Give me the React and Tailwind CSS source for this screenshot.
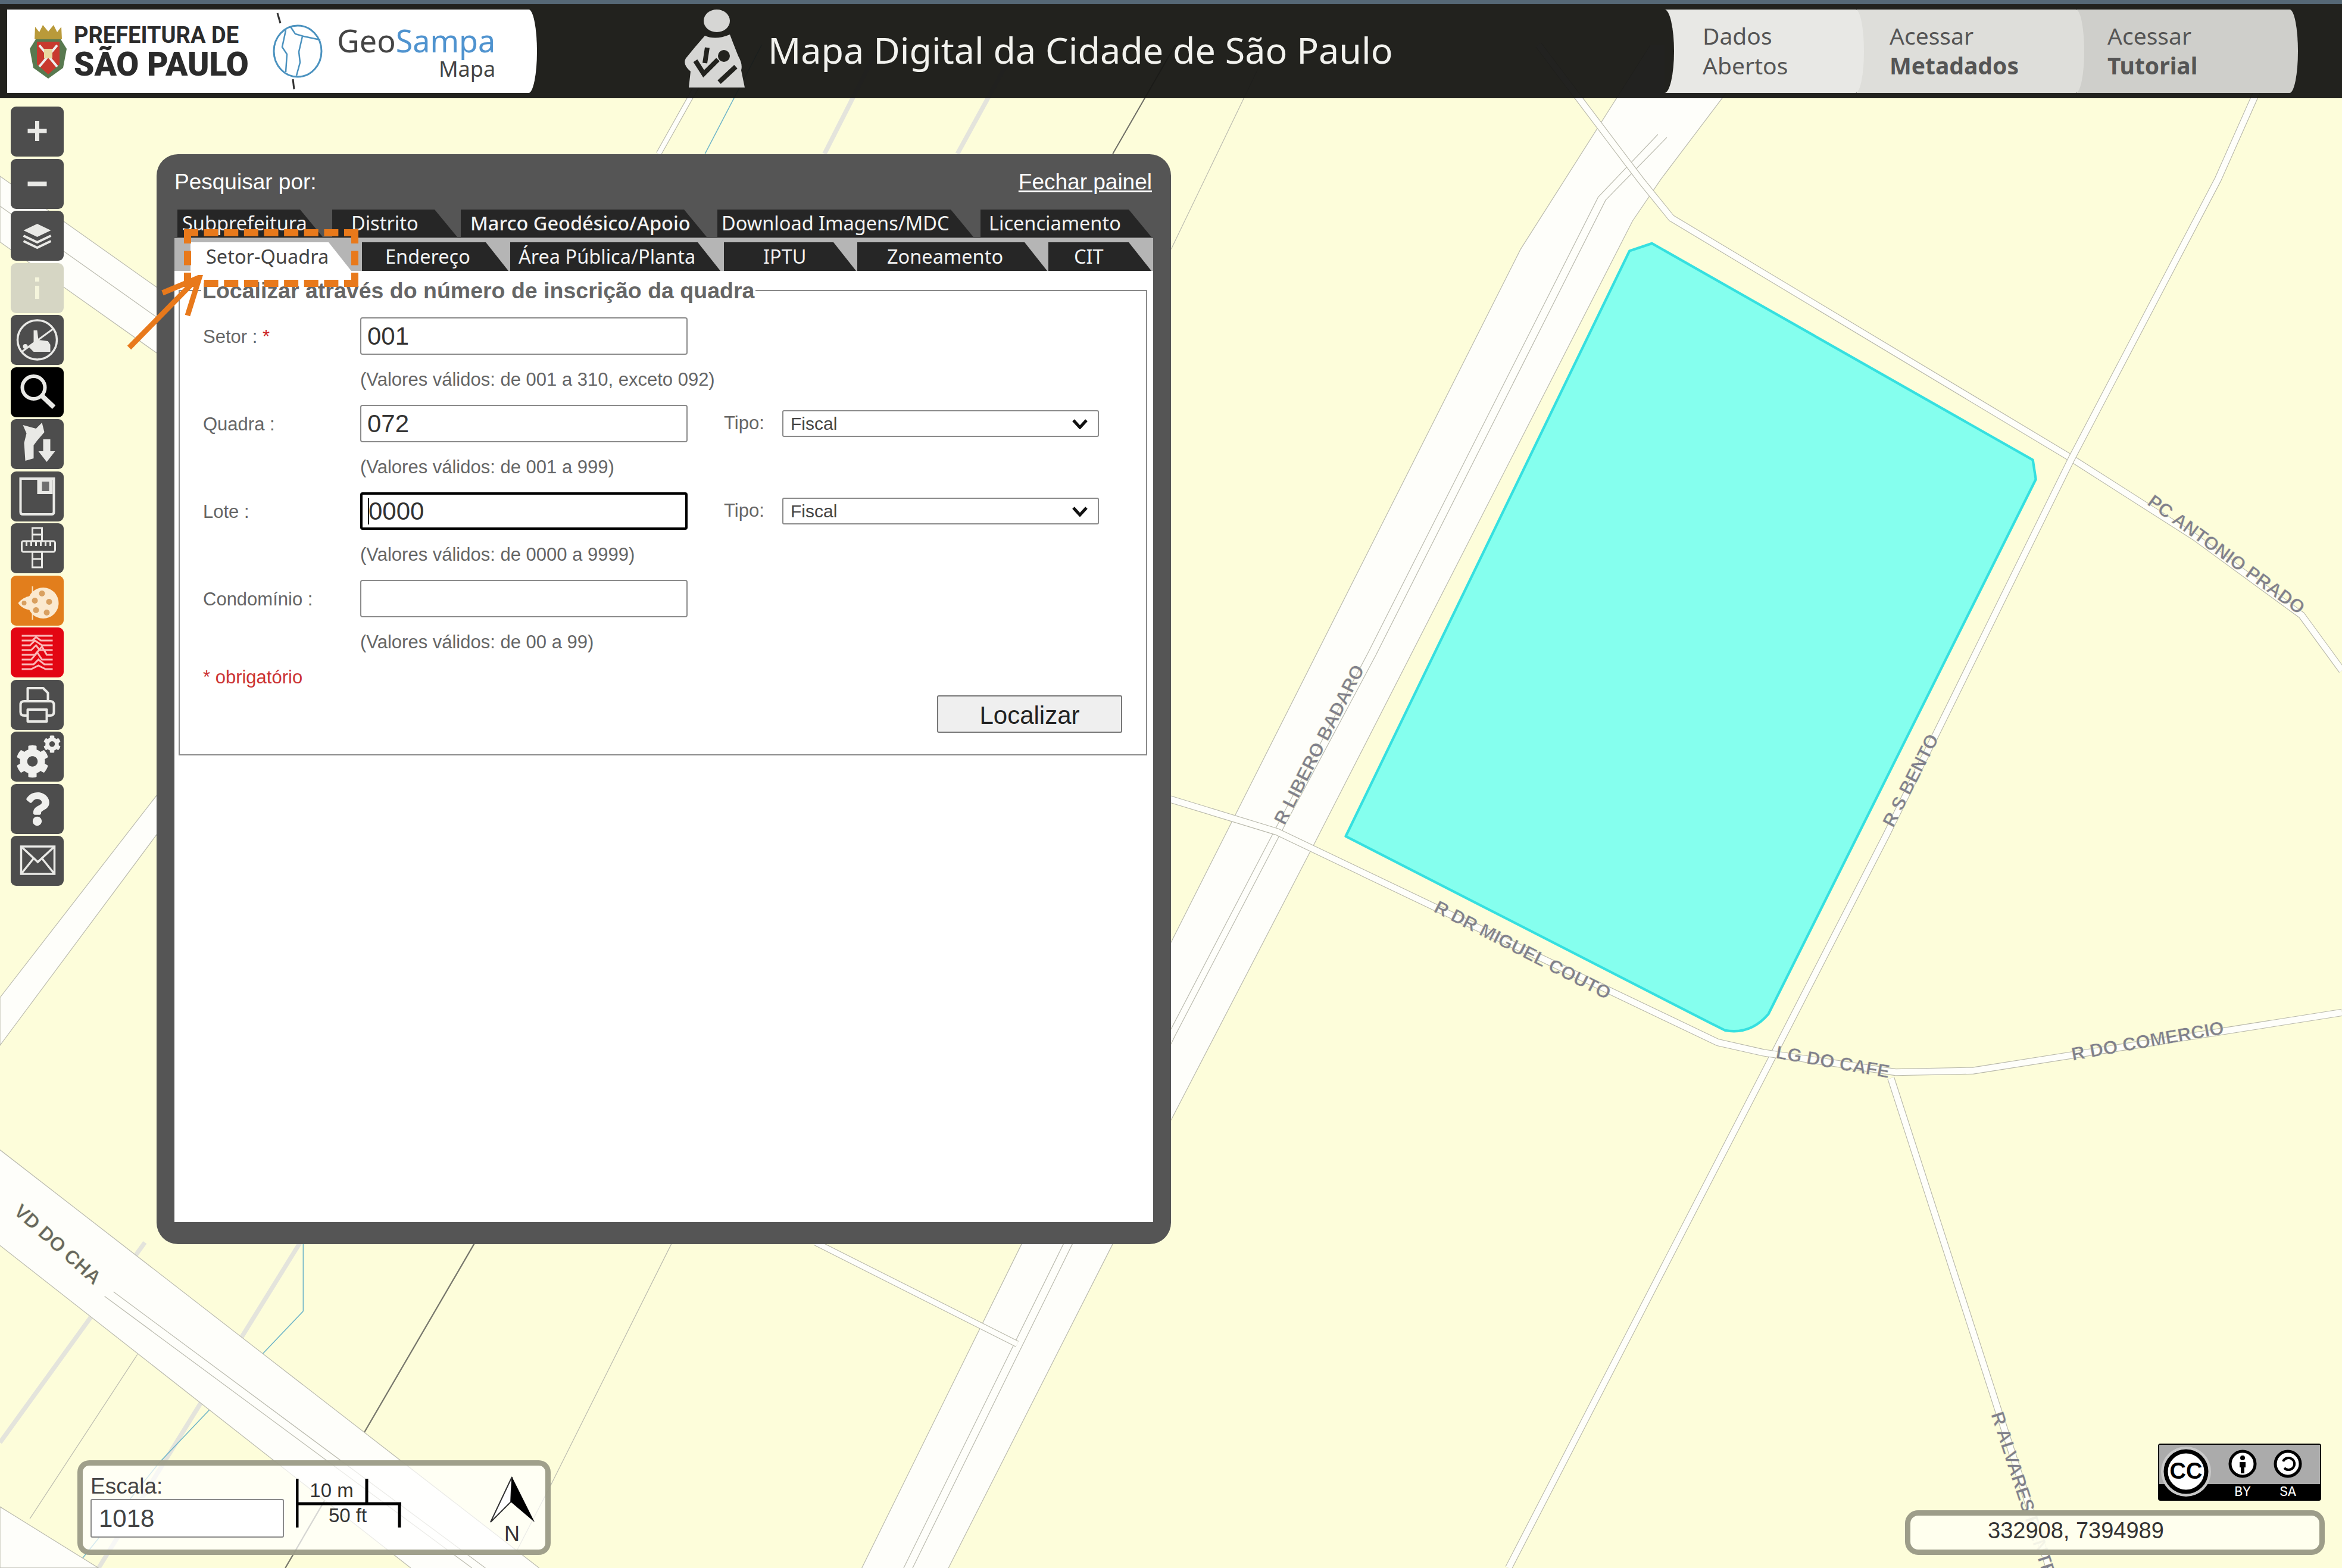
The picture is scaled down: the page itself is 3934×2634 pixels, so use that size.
import React from 'react';
import { FaCog, FaQuestion } from 'react-icons/fa';

const Road = ({ points, w = 4 }) => (
    <>
        <polyline points={points} fill="none" stroke="#b8b8aa" strokeWidth={w + 0.9} strokeLinejoin="round" />
        <polyline points={points} fill="none" stroke="#fefefa" strokeWidth={w} strokeLinejoin="round" />
    </>
);

const Line = ({ points, color = '#bcbcb0', w = 0.5 }) => (
    <polyline points={points} fill="none" stroke={color} strokeWidth={w} />
);

const Street = ({ x, y, r, size = 12.5, color = '#80808c', anchor = 'middle', children }) => (
    <text
        x={x}
        y={y}
        transform={`rotate(${r} ${x} ${y})`}
        textAnchor={anchor}
        dominantBaseline="middle"
        fontSize={size}
        fill={color}
        stroke="#fdfdda"
        strokeWidth="0.2"
        className="font-['Liberation_Sans',sans-serif] font-bold"
    >
        {children}
    </text>
);

const MapCanvas = () => (
    <svg viewBox="0 0 1568 1050" preserveAspectRatio="none" className="absolute inset-0 h-full w-full">
        <rect width="1568" height="1050" fill="#fdfdda" />

        {/* thick pale lines and thin lines at the left */}
        <Line points="589,30 552,103" color="#e4e4dc" w={3} />
        <Line points="681,30 641,103" color="#e4e4dc" w={3} />
        <Line points="97,832 0,966" color="#e4e4dc" w={3} />
        <Line points="201,832 66,1050" color="#e4e4dc" w={3} />
        <Road points="482,30 441,103" w={3} />
        <Line points="510,30 472,103" color="#6db4c8" w={0.6} />
        <Line points="203,832 203,878 107,979 50,1050" color="#6db4c8" w={0.6} />
        <Line points="787,30 745,103" color="#6f6f66" w={0.8} />
        <Line points="318,832 191,1050" color="#77776c" w={0.9} />
        <Line points="850,30 784,167" />
        <Line points="450,832 369,994 340,1050" />
        <Line points="92,907 20,1017" />

        {/* top left roads behind the toolbar */}
        <polygon points="0,118 110,196 110,240 0,162" fill="#fefefa" stroke="#bcbcb0" strokeWidth="0.5" />
        <Line points="0,138 110,216" />
        <polygon points="0,668 110,526 110,552 0,700" fill="#fefefa" stroke="#bcbcb0" strokeWidth="0.5" />

        {/* VD do Cha */}
        <polygon points="0,770 361,1050 275,1050 0,834" fill="#fefefa" />
        <Line points="0,770 361,1050" />
        <Line points="0,834 275,1050" />
        <Line points="76,865 325,1050" />
        <Line points="70,868 316,1050" />
        <polygon points="0,1009 66,1050 0,1050" fill="#fefefa" stroke="#bcbcb0" strokeWidth="0.5" />

        {/* avenue */}
        <polygon
            points="1105,30 1018,167 837,526 783,633 684,833 577,1050 635,1050 745,833 783,752 881,563 1093,148 1112,120 1180,30"
            fill="#fefefa"
        />
        <Line points="1105,30 1018,167 837,526 783,633 684,833 577,1050" />
        <Line points="1180,30 1112,120 1093,148 881,563 783,752 745,833 635,1050" />
        <Line points="1110,90 1070,132 916,437 856,551 783,691 712,833 605,1050" />
        <Line points="1116,92 1075,134 921,439 860,553 787,693 718,833 611,1050" />
        <Road points="546,832 681,900" w={3.5} />

        {/* streets around the block */}
        <Road points="1030,30 1098,120 1119,146 1387,307 1470,360 1541,412 1568,449" />
        <Road points="1525,30 1485,120 1387,307 1263,559 1184,713 1010,1050" />
        <Road points="783,535 855,557 1150,698 1181,705 1269,718 1321,717 1568,678" />
        <Road points="1266,722 1372,1050" />

        {/* selected block */}
        <path
            d="M1091,168 L1106,163 L1361,308 L1363,321 L1184,679 Q1172,693 1155,690 L1145,685 L901,560 Z"
            fill="#85ffee"
            stroke="#35e0e0"
            strokeWidth="1.7"
            strokeLinejoin="round"
        />

        <Street x={884} y={499} r={-63}>R  LIBERO BADARO</Street>
        <Street x={1280} y={523} r={-63}>R S  BENTO</Street>
        <Street x={1490} y={372} r={36}>PC  ANTONIO PRADO</Street>
        <Street x={1019} y={637} r={27}>R DR  MIGUEL COUTO</Street>
        <Street x={1227} y={712} r={10}>LG  DO CAFE</Street>
        <Street x={1438} y={698} r={-10}>R  DO COMERCIO</Street>
        <Street x={1336} y={946} r={72} anchor="start">R  ALVARES PENTEADO</Street>
        <Street x={38} y={834} r={42} color="#66665f" size={13}>VD  DO CHA</Street>
    </svg>
);

const Crest = () => (
    <svg viewBox="0 0 70 92" className="h-[92px] w-[70px] shrink-0">
        <path d="M13 5 L20 14 L26 2 L35 13 L44 2 L50 14 L57 5 L58 26 L12 26 Z" fill="#b99a3a" />
        <path d="M14 26 H56 L66 42 L60 74 L35 92 L10 74 L4 42 Z" fill="#58794f" />
        <path d="M16 30 H54 V68 L35 85 L16 68 Z" fill="#c8392e" />
        <path d="M20 36 L50 72 M50 36 L20 72" stroke="#eee" strokeWidth="4" />
        <rect x="28" y="42" width="14" height="16" fill="#e9d9a0" />
    </svg>
);

const Globe = () => (
    <svg viewBox="0 0 100 130" className="h-[130px] w-[100px]">
        <path d="M12 1 L17 18" stroke="#333" strokeWidth="3" />
        <path d="M38 112 L40 129" stroke="#333" strokeWidth="3" />
        <ellipse cx="46" cy="65" rx="40" ry="43" fill="none" stroke="#4b92bf" strokeWidth="3" />
        <path
            d="M34 24 L42 36 L56 40 L84 46 M54 40 L48 66 L50 84 L44 106 M26 30 L20 58 L28 70 L26 100"
            fill="none"
            stroke="#4b92bf"
            strokeWidth="2.5"
        />
    </svg>
);

const Mother = () => (
    <svg viewBox="0 0 103 131" className="h-[131px] w-[103px]">
        <ellipse cx="56" cy="19" rx="22" ry="19" fill="#d6d6d4" />
        <path
            d="M36 44 Q54 52 78 42 Q84 58 92 78 Q100 92 97 102 L103 131 H9 L12 104 Q-2 92 4 82 Q20 62 36 44 Z"
            fill="#d6d6d4"
        />
        <circle cx="68" cy="78" r="10" fill="#22221e" />
        <path d="M20 86 L34 108 L58 84 M40 64 L36 90 M60 122 L88 96" stroke="#22221e" strokeWidth="8" fill="none" />
    </svg>
);

const iconStroke = '#e9e9e6';

const toolButtons = [
    {
        key: 'plus',
        bg: 'bg-[#4d4d4d]',
        icon: <path d="M44 24 V58 M28 41 H60" stroke={iconStroke} strokeWidth="7" />,
    },
    {
        key: 'minus',
        bg: 'bg-[#4d4d4d]',
        icon: <path d="M28 42 H60" stroke={iconStroke} strokeWidth="8" />,
    },
    {
        key: 'layers',
        bg: 'bg-[#4d4d4d]',
        icon: (
            <>
                <path d="M44 22 L67 33 L44 44 L21 33 Z" fill={iconStroke} />
                <path d="M21 42 L44 53 L67 42 M21 51 L44 62 L67 51" fill="none" stroke={iconStroke} strokeWidth="4" />
            </>
        ),
    },
    {
        key: 'info',
        bg: 'bg-[#d6d6c4]',
        icon: <path d="M44 24 V31 M44 38 V60" stroke="#f5f5dc" strokeWidth="7" />,
    },
    {
        key: 'hand',
        bg: 'bg-[#4d4d4d]',
        icon: (
            <>
                <circle cx="44" cy="42" r="33" fill="none" stroke={iconStroke} strokeWidth="3.5" />
                <path d="M18 62 L70 24" stroke={iconStroke} strokeWidth="3" />
                <path d="M38 26 L44 26 L46 42 L62 44 L66 50 L66 62 L38 62 L30 54 L38 48 Z" fill={iconStroke} />
                <circle cx="24" cy="53" r="4" fill={iconStroke} />
            </>
        ),
    },
    {
        key: 'search',
        bg: 'bg-black',
        icon: (
            <>
                <circle cx="38" cy="34" r="19" fill="none" stroke={iconStroke} strokeWidth="6" />
                <path d="M52 48 L72 67" stroke={iconStroke} strokeWidth="8" />
            </>
        ),
    },
    {
        key: 'download',
        bg: 'bg-[#4d4d4d]',
        icon: (
            <>
                <path d="M20 10 L42 16 L52 6 L56 22 L44 36 L38 44 L38 66 L24 70 L22 40 L26 24 Z" fill={iconStroke} />
                <path d="M54 34 H66 V54 H74 L60 72 L46 54 H54 Z" fill={iconStroke} />
            </>
        ),
    },
    {
        key: 'save',
        bg: 'bg-[#4d4d4d]',
        icon: (
            <>
                <path d="M16 12 H72 V68 Q72 72 68 72 H20 Q16 72 16 68 Z" fill="none" stroke={iconStroke} strokeWidth="4" />
                <rect x="44" y="12" width="26" height="26" fill={iconStroke} />
                <rect x="52" y="17" width="12" height="16" fill="#6f6f6f" />
            </>
        ),
    },
    {
        key: 'ruler',
        bg: 'bg-[#4d4d4d]',
        icon: (
            <g fill="none" stroke={iconStroke} strokeWidth="3">
                <rect x="18" y="30" width="56" height="18" rx="3" />
                <path d="M26 30 V38 M34 30 V38 M42 30 V38 M50 30 V38 M58 30 V38 M66 30 V38" />
                <rect x="36" y="8" width="16" height="22" />
                <rect x="36" y="48" width="16" height="26" />
                <path d="M36 19 H52 M36 60 H52" />
            </g>
        ),
    },
    {
        key: 'palette',
        bg: 'bg-[#e27e1c]',
        icon: (
            <>
                <path d="M36 18 V74" stroke="#f8e0bd" strokeWidth="2" />
                <path d="M33 34 L33 58 Q18 56 12 46 Q20 36 33 34 Z" fill="#fbe9cf" />
                <circle cx="54" cy="46" r="26" fill="#fbe9cf" />
                <g fill="#d9a060">
                    <circle cx="52" cy="30" r="5" />
                    <circle cx="40" cy="42" r="5" />
                    <circle cx="64" cy="44" r="5" />
                    <circle cx="42" cy="58" r="5" />
                    <circle cx="60" cy="62" r="5" />
                    <circle cx="22" cy="46" r="4" />
                </g>
            </>
        ),
    },
    {
        key: 'contours',
        bg: 'bg-[#e30613]',
        icon: (
            <g fill="none" stroke="#fbb8b8" strokeWidth="3">
                <path d="M18 14 H70" />
                <path d="M18 22 H36 L42 16 L50 22 H70" />
                <path d="M18 30 H32 L40 22 L52 30 H70" />
                <path d="M18 38 H34 L42 30 L48 38 H70" />
                <path d="M18 46 H40 L52 32 L60 46 H70" />
                <path d="M18 54 H34 L44 42 L52 54 H70" />
                <path d="M18 62 H38 L46 54 L56 62 H70" />
                <path d="M18 70 H34 L46 64 L58 70 H70" />
            </g>
        ),
    },
    {
        key: 'print',
        bg: 'bg-[#4d4d4d]',
        icon: (
            <g fill="none" stroke={iconStroke} strokeWidth="4" strokeLinejoin="round">
                <path d="M28 36 V14 H54 L62 22 V36" />
                <path d="M28 60 H22 Q16 60 16 54 V42 Q16 36 22 36 H66 Q72 36 72 42 V54 Q72 60 66 60 H60" />
                <rect x="28" y="50" width="32" height="20" />
            </g>
        ),
    },
    {
        key: 'gears',
        bg: 'bg-[#4d4d4d]',
        icon: (
            <foreignObject x="0" y="0" width="88" height="84">
                <div className="relative h-[84px] w-[88px] text-[#f0f0ee]">
                    <FaCog className="absolute left-[8px] top-[22px] h-[56px] w-[56px]" />
                    <FaCog className="absolute left-[54px] top-[6px] h-[30px] w-[30px]" />
                </div>
            </foreignObject>
        ),
    },
    {
        key: 'help',
        bg: 'bg-[#4d4d4d]',
        icon: (
            <foreignObject x="0" y="0" width="88" height="84">
                <div className="flex h-[84px] w-[88px] items-center justify-center text-[#f0f0ee]">
                    <FaQuestion className="h-[56px] w-[44px]" />
                </div>
            </foreignObject>
        ),
    },
    {
        key: 'mail',
        bg: 'bg-[#4d4d4d]',
        icon: (
            <g fill="none" stroke={iconStroke} strokeWidth="3.5">
                <rect x="17" y="18" width="56" height="46" />
                <path d="M17 18 L45 44 L73 18 M17 64 L38 38 M73 64 L52 38" />
            </g>
        ),
    },
];

const tabsTop = [
    { label: 'Subprefeitura', box: 'ml-[5px] w-[244px] pl-[8px]' },
    { label: 'Distrito', box: 'ml-[16px] w-[210px] pl-[32px]' },
    { label: 'Marco Geodésico/Apoio', box: 'ml-[6px] w-[413px] pl-[16px] font-medium' },
    { label: 'Download Imagens/MDC', box: 'ml-[18px] w-[430px] pl-[7px]' },
    { label: 'Licenciamento', box: 'ml-[12px] w-[287px] pl-[14px]' },
];

const tabsBottom = [
    { label: 'Endereço', box: 'ml-[18px] w-[246px] pl-[39px]' },
    { label: 'Área Pública/Planta', box: 'ml-[3px] w-[353px] pl-[14px]' },
    { label: 'IPTU', box: 'ml-[6px] w-[222px] pl-[66px]' },
    { label: 'Zoneamento', box: 'ml-[2px] w-[319px] pl-[50px]' },
    { label: 'CIT', box: 'ml-[2px] w-[173px] pl-[43px]' },
];

const tabShape = "[clip-path:polygon(0_0,calc(100%-38px)_0,100%_100%,0_100%)] flex items-center whitespace-nowrap font-['Noto_Sans',sans-serif] text-[32.5px]";

const FormRow = ({ label, required, value, focused, hint, tipo }) => (
    <div>
        <div className="flex h-[63px] items-center">
            <span className="w-[303px] pl-[39px] pt-[3px] font-['Liberation_Sans',sans-serif] text-[31px] text-[#666]">
                {label}
                {required && <span className="text-[#c22]"> *</span>}
            </span>
            <div className="relative">
                <input
                    readOnly
                    value={value}
                    className={`h-[63px] w-[550px] rounded-[4px] bg-white pl-[10px] font-['Liberation_Sans',sans-serif] text-[42px] text-[#333] outline-none ${
                        focused ? 'border-[4px] border-black' : 'border-2 border-[#8a8a8a]'
                    }`}
                />
                {focused && <div className="absolute left-[13px] top-[10px] h-[44px] w-[2px] bg-black" />}
            </div>
            {tipo && (
                <>
                    <span className="ml-[61px] w-[98px] font-['Liberation_Sans',sans-serif] text-[31px] text-[#666]">Tipo:</span>
                    <div className="flex h-[45px] w-[532px] items-center justify-between rounded-[3px] border-2 border-[#8a8a8a] bg-white pl-[12px] pr-[16px] font-['Liberation_Sans',sans-serif] text-[30px] text-[#444]">
                        Fiscal
                        <svg viewBox="0 0 28 18" className="h-[18px] w-[28px]">
                            <path d="M3 3 L14 15 L25 3" fill="none" stroke="#111" strokeWidth="5" />
                        </svg>
                    </div>
                </>
            )}
        </div>
        <div className="flex h-[84px] items-center pl-[303px] font-['Liberation_Sans',sans-serif] text-[31px] text-[#666]">
            {hint}
        </div>
    </div>
);

const SearchPanel = () => (
    <div className="absolute left-[263px] top-[259px] flex h-[1831px] w-[1704px] flex-col rounded-[36px] bg-[#555] px-[30px] pb-[37px]">
        <div className="flex h-[93px] items-center justify-between pr-[2px] font-['Liberation_Sans',sans-serif] text-[37px] text-white">
            <span>Pesquisar por:</span>
            <a className="underline">Fechar painel</a>
        </div>
        <div className="flex h-[48px] items-start">
            {tabsTop.map((t) => (
                <div key={t.label} className={`${tabShape} ${t.box} h-[46px] bg-[#262626] text-[#f2f2f2]`}>
                    {t.label}
                </div>
            ))}
        </div>
        <div className="flex h-[55px] items-end bg-[#b5b5b5]">
            <div className={`${tabShape} ml-[27px] h-[48px] w-[270px] bg-white pl-[26px] text-[#444]`}>Setor-Quadra</div>
            {tabsBottom.map((t) => (
                <div key={t.label} className={`${tabShape} ${t.box} h-[48px] bg-[#262626] text-[#f2f2f2]`}>
                    {t.label}
                </div>
            ))}
        </div>
        <div className="flex-1 bg-white pl-[7px] pt-[13px]">
            <fieldset className="h-[801px] w-[1627px] border-2 border-[#8a8a8a]">
                <legend className="ml-[36px] bg-white px-[2px] font-['Liberation_Sans',sans-serif] text-[37.5px] font-bold leading-[40px] text-[#666]">
                    Localizar através do número de inscrição da quadra
                </legend>
                <div className="pt-[25px]">
                    <FormRow label="Setor :" required value="001" hint="(Valores válidos: de 001 a 310, exceto 092)" />
                    <FormRow label="Quadra :" value="072" tipo hint="(Valores válidos: de 001 a 999)" />
                    <FormRow label="Lote :" value="0000" focused tipo hint="(Valores válidos: de 0000 a 9999)" />
                    <FormRow label="Condomínio :" value="" hint="(Valores válidos: de 00 a 99)" />
                    <div className="flex h-[34px] items-center pl-[39px] font-['Liberation_Sans',sans-serif] text-[31px] text-[#c33]">
                        * obrigatório
                    </div>
                    <div className="flex justify-end pr-[40px] pt-[13px]">
                        <button className="h-[63px] w-[311px] rounded-[3px] border-2 border-[#777] bg-[#efefef] pb-[8px] font-['Liberation_Sans',sans-serif] text-[42px] text-[#222]">
                            Localizar
                        </button>
                    </div>
                </div>
            </fieldset>
        </div>
    </div>
);

const ScaleBox = () => (
    <div className="absolute left-[130px] top-[2453px] flex h-[159px] w-[795px] rounded-[20px] border-[9px] border-[#8f8f78]/85 bg-white/70 pl-[13px]">
        <div className="w-[325px] font-['Liberation_Sans',sans-serif]">
            <div className="mt-[13px] h-[43px] text-[37px] leading-[43px] text-[#444]">Escala:</div>
            <input
                readOnly
                value="1018"
                className="h-[65px] w-[325px] rounded-[3px] border-2 border-[#8a8a8a] bg-white pl-[12px] text-[42px] text-[#444] outline-none"
            />
        </div>
        <svg viewBox="0 0 190 100" className="ml-[20px] mt-[18px] h-[100px] w-[190px]">
            <path d="M2 4 V86 M119 4 V46 M174 46 V86 M0 46 H177" stroke="#000" strokeWidth="5" fill="none" />
            <text x="60" y="35" textAnchor="middle" fontSize="33" fill="#333" className="font-['Liberation_Sans',sans-serif]">10 m</text>
            <text x="87" y="77" textAnchor="middle" fontSize="33" fill="#333" className="font-['Liberation_Sans',sans-serif]">50 ft</text>
        </svg>
        <svg viewBox="0 0 84 125" className="ml-[133px] mt-[17px] h-[125px] w-[84px]">
            <path d="M40 2 L4 78 L38 44 Z" fill="#fff" stroke="#333" strokeWidth="2" />
            <path d="M40 2 L78 78 L38 44 Z" fill="#000" />
            <text x="40" y="110" textAnchor="middle" fontSize="36" fill="#333" className="font-['Liberation_Sans',sans-serif]">N</text>
        </svg>
    </div>
);

const CcBadge = () => (
    <svg viewBox="0 0 274 96" className="absolute left-[3625px] top-[2425px] h-[96px] w-[274px]">
        <rect width="274" height="96" rx="4" fill="#000" />
        <rect x="2" y="2" width="270" height="66" fill="#ababab" />
        <circle cx="47" cy="47" r="42" fill="#c9c9c9" />
        <circle cx="47" cy="47" r="34" fill="#fff" stroke="#000" strokeWidth="7" />
        <text x="47" y="59" textAnchor="middle" fontSize="38" fontWeight="bold" className="font-['Liberation_Sans',sans-serif]">CC</text>
        <circle cx="142" cy="34" r="21" fill="#fff" stroke="#000" strokeWidth="5" />
        <circle cx="142" cy="24" r="4" fill="#000" />
        <path d="M137 31 H147 V40 H145 V50 H139 V40 H137 Z" fill="#000" />
        <circle cx="218" cy="34" r="21" fill="#fff" stroke="#000" strokeWidth="5" />
        <path d="M210 30 A10 10 0 1 1 212 41" fill="none" stroke="#000" strokeWidth="4" />
        <text x="142" y="88" textAnchor="middle" fontSize="23" fill="#fff" className="font-['Liberation_Mono',monospace]">BY</text>
        <text x="218" y="88" textAnchor="middle" fontSize="23" fill="#fff" className="font-['Liberation_Mono',monospace]">SA</text>
    </svg>
);

const App = () => (
    <div className="relative h-[2634px] w-[3934px] overflow-hidden bg-[#fdfdda]">
        <MapCanvas />

        <header className="relative flex h-[165px] items-start border-t-[7px] border-t-[#566876] bg-[#161614]/95 pt-[9px]">
            <div className="ml-[12px] flex h-[140px] w-[890px] items-center rounded-r-[14px_70px] bg-white pl-[34px]">
                <Crest />
                <div className="ml-[8px] mt-[6px] w-[306px] whitespace-nowrap font-['Roboto',sans-serif] font-bold text-[#2b2b2b]">
                    <div className="text-[38px] leading-[38px]">PREFEITURA DE</div>
                    <div className="text-[55px] font-black leading-[60px]">SÃO PAULO</div>
                </div>
                <div className="ml-[24px]">
                    <Globe />
                </div>
                <div className="ml-[12px] flex flex-col items-end font-['Noto_Sans',sans-serif]">
                    <div className="text-[52px] leading-[60px] text-[#444]">
                        Geo<span className="text-[#4f93cf]">Sampa</span>
                    </div>
                    <div className="text-[36px] leading-[36px] text-[#444]">Mapa</div>
                </div>
            </div>

            <div className="ml-[246px]">
                <Mother />
            </div>
            <h1 className="ml-[39px] font-['Noto_Sans',sans-serif] text-[61px] leading-[136px] text-[#f2f2ee]">
                Mapa Digital da Cidade de São Paulo
            </h1>

            <nav className="absolute left-[2796px] top-[9px] flex h-[140px] font-['Noto_Sans',sans-serif] text-[39px] leading-[50px] text-[#555]">
                <div className="relative z-30 w-[335px] rounded-r-[14px_70px] bg-[#e8e8e5] pl-[64px] pt-[19px]">
                    Dados<br />Abertos
                </div>
                <div className="relative z-20 -ml-[12px] w-[382px] rounded-r-[14px_70px] bg-[#dededa] pl-[55px] pt-[19px]">
                    Acessar<br /><b>Metadados</b>
                </div>
                <div className="relative z-10 -ml-[12px] w-[371px] rounded-r-[14px_70px] bg-[#cfcfcb] pl-[51px] pt-[19px]">
                    Acessar<br /><b>Tutorial</b>
                </div>
                <div className="absolute left-0 top-0 z-40 h-[140px] w-[16px] rounded-r-[16px_70px] bg-[#22221e]" />
            </nav>
        </header>

        <div className="absolute left-[18px] top-[179px] flex w-[89px] flex-col gap-[3.5px]">
            {toolButtons.map((b) => (
                <div key={b.key} className={`h-[84px] rounded-[9px] ${b.bg}`}>
                    <svg viewBox="0 0 88 84" className="h-[84px] w-[89px]">
                        {b.icon}
                    </svg>
                </div>
            ))}
        </div>

        <SearchPanel />

        {/* orange tutorial highlight */}
        <div className="absolute left-[309px] top-[385px] h-[97px] w-[293px] border-[12px] border-dashed border-[#e8791b]" />
        <svg viewBox="0 0 150 130" className="absolute left-[205px] top-[462px] h-[130px] w-[150px]">
            <path d="M12 122 L124 8" stroke="#e8791b" strokeWidth="9" />
            <path d="M68 30 L130 4 L110 68" fill="none" stroke="#e8791b" strokeWidth="9" />
        </svg>

        <ScaleBox />
        <CcBadge />

        <div className="absolute left-[3200px] top-[2537px] flex h-[75px] w-[705px] items-center rounded-[22px] border-[9px] border-[#9d9d89] bg-[#fffff0]/90 pb-[6px] pl-[130px] font-['Liberation_Sans',sans-serif] text-[38px] text-[#333]">
            332908, 7394989
        </div>
    </div>
);

export default App;
